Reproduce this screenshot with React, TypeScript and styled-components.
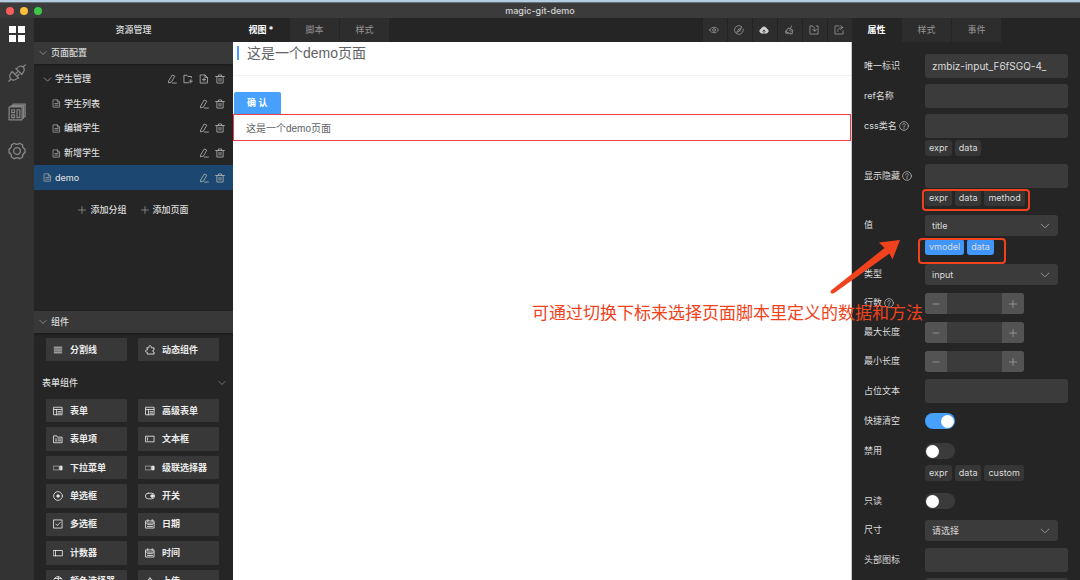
import React from 'react';
import styled, { createGlobalStyle, css } from 'styled-components';

const GlobalStyle = createGlobalStyle`
  *, *::before, *::after { box-sizing: border-box; }
  html, body { margin: 0; background: #252525; }
  body {
    font-family: Inter, "Noto Sans CJK SC", sans-serif;
    font-size: 9px;
    line-height: 12px;
    color: #dcdcdc;
  }
  button, input, select { font: inherit; color: inherit; margin: 0; border: 0; padding: 0; }
  button { background: none; cursor: pointer; }
  h1, h2, h3, p, ul { margin: 0; padding: 0; font-size: inherit; font-weight: inherit; list-style: none; }
  svg { display: block; flex: none; }
`;

/* ---------- icons ---------- */

const icons = {
  chevron: <path d="M2 5l6 6 6-6" />,
  edit: <path d="M3 10.500L8.500 1.500l4 2-5.500 9.500-4 1zM8.500 14.500H15" />,
  folderAdd: <path d="M13.500 6V4H8L6.500 2H1.500v12h8M12.500 9v5M10 11.500h5" />,
  fileAdd: <path d="M2.500 1.500h7l4 4v9h-11zM9.500 1.500v4h4M8 6.500v5M5.500 9h5" />,
  file: <path d="M2.500 1.500h7l4 4v9h-11zM9.500 1.500v4h4M5 8h6M5 11h6" />,
  trash: <path d="M1 4h14M5.500 4V1.500h5V4M3 4v10.500h10V4M6.500 7v4.500M9.500 7v4.500" />,
  plus: <path d="M8 1v14M1 8h14" />,
  minus: <path d="M2 8h12" />,
  lines: <path d="M2 3.500h12M2 6.500h12M2 9.500h12M2 12.500h12" />,
  puzzle: <path d="M3.500 4.500H6c-1-4.500 5-4.500 4 0h4.500v3.200c-3 0-3 3.600 0 3.600v3.200h-11v-3.200c-4 .2-4-3.800 0-3.600z" />,
  form: <path d="M1.500 2h13v12h-13zM1.500 5.500h13M5.500 5.500V14M8 9h4.500M8 11.500h4.500" />,
  formItem: <path d="M1.500 3H6l1 2h7.500v9h-13zM4 8h2M8 8h4.500M4 11h2M8 11h4.500" />,
  textbox: <path d="M1.500 3.500h13v9h-13zM4 6v4" />,
  dropdown: (
    <>
      <path d="M1 5h9v6H1z" opacity=".6" />
      <path d="M11.500 5h3v6h-3z" fill="currentColor" />
    </>
  ),
  radio: (
    <>
      <circle cx="8" cy="8" r="7" />
      <circle cx="8" cy="8" r="2" fill="currentColor" />
    </>
  ),
  toggle: (
    <>
      <rect x="0.700" y="3.500" width="14.600" height="9" rx="4.500" />
      <circle cx="11.500" cy="8" r="2.200" fill="currentColor" />
    </>
  ),
  check: <path d="M1.500 1.500h13v13h-13zM4.500 8l2.500 2.500 4.500-5" />,
  calendar: <path d="M1.500 3h13v11.500h-13zM1.500 6.500h13M4.500 1v3M11.500 1v3M4 9h2M7 9h2M10 9h2M4 12h2M7 12h2M10 12h2" />,
  counter: <path d="M1 4h14v8.500H1zM4 4v8.500" />,
  palette: <path d="M8 1a7 7 0 1 0 0 14zM8 1a7 7 0 0 1 0 14M1 8h14M3 4h10" />,
  upload: <path d="M8 14V3M3.500 7.500L8 3l4.500 4.500M2 14.500h12" />,
  help: (
    <>
      <circle cx="8" cy="8" r="7" />
      <path d="M5.800 6.300c0-3 4.400-2.800 4.400-.2C10.200 7.600 8 7.600 8 9.500M8 11v1.300" />
    </>
  ),
  eye: (
    <>
      <path d="M1 8c3-6 11-6 14 0-3 6-11 6-14 0z" />
      <circle cx="8" cy="8" r="2.300" />
    </>
  ),
  compass: (
    <>
      <path d="M12.500 2.700A7 7 0 1 0 14.700 6.500" />
      <path d="M4.500 11.500L7 7l5-3-2.500 5z" />
      <path d="M7 7l2.500 2" />
    </>
  ),
  cloud: (
    <>
      <path d="M4.500 13a3.300 3.300 0 0 1-.8-6.500 4.400 4.400 0 0 1 8.600 0 3.300 3.300 0 0 1-.8 6.500z" fill="currentColor" />
      <path d="M8 13V8.500M6 10l2-2 2 2" stroke="#2d2d2d" />
    </>
  ),
  broom: <path d="M12 1.500L10.500 6M7 5l7 3-1 6.500-3-2M7 5L2 10.500l9 4M5 8l-2.500 4.500 3 1.500 1.500-2.500M9 8.500l3 1.500" />,
  importBox: <path d="M4.500 1.500h-3v13h13v-13h-3M5 1.500c3.500 1 4 3.500 4 8M6 7l3 3 3-3" />,
  exportBox: <path d="M8 1.500H1.500v13h13V9M6 10c0-4 2-6 8-6M10.500 1L14 4l-3.500 3" />,
  link: (
    <>
      <path d="M7 4l5.500 5.500M7.500 4.500c1.300-2.500 4.300-3.500 6-1.800s.9 4.900-1.500 6.300M13.600 2.500L15.300.8" />
      <path d="M3.500 6.500l6 6M4 7c-2.500 1.300-3.300 4.500-1.500 6.300s4.900.9 6.500-1.300M2.500 13.500L.7 15.300" />
      <path d="M8.500 7L7 8.500M10 9L8.500 10.500" />
    </>
  ),
  template: (
    <path d="M1 3.500h11.500V15H1zM3 3.500V2.300h10.800V13.500h-1.300M4.500 2.300V1H15.200v11.200h-1.400M3.300 6h2.500v2.500H3.300zM3.300 10.500h2.500V13H3.300zM8 6h2.500v7H8z" />
  ),
  gear: (
    <>
      <path d="M15.100 6.500V9.500Q12.600 10.600 12.900 13.400L10.300 14.900Q8 13 5.700 14.900L3.100 13.400Q3.400 10.600 .9 9.500V6.500Q3.400 5.400 3.100 2.600L5.700 1.100Q8 3 10.300 1.100L12.900 2.600Q12.600 5.400 15.100 6.500Z" />
      <circle cx="8" cy="8" r="3" />
    </>
  ),
};

type IconName = keyof typeof icons;

const Icon = ({ name, size = 10, weight = 1.3 }: { name: IconName; size?: number; weight?: number }) => (
  <svg
    width={size}
    height={size}
    viewBox="0 0 16 16"
    fill="none"
    stroke="currentColor"
    strokeWidth={weight}
    strokeLinecap="round"
    strokeLinejoin="round"
    aria-hidden="true"
  >
    {icons[name]}
  </svg>
);

/* ---------- window frame ---------- */

const Window = styled.div`
  position: relative;
  display: flex;
  flex-direction: column;
  height: 100vh;
  overflow: hidden;
  border-top: 2px solid #b4cbe0;
`;

const TitleBar = styled.header`
  flex: none;
  display: grid;
  grid-template-columns: 1fr auto 1fr;
  align-items: center;
  height: 16px;
  padding: 0 6px;
  border-top: 1px solid #65707a;
  background: #3b3b3b;
  color: #d4d4d4;
  font-weight: 500;
`;

const Lights = styled.div`
  display: flex;
  gap: 6px;
`;

const Light = styled.span<{ $color: string }>`
  width: 8px;
  height: 8px;
  border-radius: 50%;
  background: ${(p) => p.$color};
`;

const Workspace = styled.div`
  flex: 1;
  display: grid;
  grid-template-columns: 34px 199px minmax(0, 1fr) 228px;
  min-height: 0;
`;

const Rail = styled.nav`
  display: flex;
  flex-direction: column;
  align-items: center;
  gap: 21px;
  padding-top: 7px;
  background: #333;
`;

const RailButton = styled.button`
  display: grid;
  place-items: center;
  width: 18px;
  height: 18px;
  color: #858585;
`;

const Squares = styled.span`
  display: grid;
  grid-template-columns: 7px 7px;
  grid-auto-rows: 7px;
  gap: 2px;

  i { background: #fff; }
`;

/* ---------- resource sidebar ---------- */

const Sidebar = styled.aside`
  display: flex;
  flex-direction: column;
  min-height: 0;
  overflow: hidden;
  background: #252525;
`;

const SidebarTitle = styled.h2`
  flex: none;
  height: 24px;
  line-height: 24px;
  text-align: center;
  font-weight: 500;
`;

const SectionHeader = styled.button`
  flex: none;
  display: flex;
  align-items: center;
  gap: 4px;
  width: 100%;
  height: 22px;
  padding: 0 5px;
  background: #383838;
  box-shadow: 0 1px 2px #1a1a1a;
  font-weight: 500;

  svg { color: #a0a0a0; }
`;

const PageSection = styled.section`
  flex: none;
  min-height: 247px;
  padding-top: 3px;
`;

const Tree = styled.ul`
  display: grid;
  grid-auto-rows: 1fr;
  min-height: 123px;
`;

const TreeRow = styled.li<{ $indent: number; $active?: boolean }>`
  display: flex;
  align-items: center;
  gap: 3px;
  padding: 0 8px 0 ${(p) => p.$indent}px;
  background: ${(p) => (p.$active ? '#1b4770' : 'transparent')};
  font-weight: 500;

  > svg { color: #a8a8a8; }
`;

const RowActions = styled.span`
  display: flex;
  gap: 6px;
  margin-left: auto;
  color: #b4b4b4;
`;

const AddBar = styled.div`
  display: flex;
  justify-content: center;
  gap: 14px;
  padding-top: 14px;
`;

const AddButton = styled.button`
  display: flex;
  align-items: center;
  gap: 4px;
  font-weight: 500;

  svg { color: #a8a8a8; }
`;

const Palette = styled.section`
  flex: 1;
  min-height: 0;
  overflow: hidden;
  padding: 5px 7px 0 8px;
`;

const WidgetGrid = styled.div<{ $height: number }>`
  display: grid;
  grid-template-columns: 1fr 1fr;
  grid-auto-rows: 1fr;
  gap: 5px 11px;
  min-height: ${(p) => p.$height}px;
  padding: 0 7px 0 4px;
`;

const Widget = styled.button`
  display: flex;
  align-items: center;
  gap: 7px;
  padding: 0 7px;
  border-radius: 1px;
  background: #383838;
  color: #ececec;
  font-weight: 700;
  white-space: nowrap;
`;

const GroupHeader = styled.button`
  display: flex;
  align-items: center;
  justify-content: space-between;
  width: 100%;
  height: 38px;
  padding-top: 6px;
  font-weight: 500;

  svg { color: #8c8c8c; }
`;

/* ---------- tabs and toolbar ---------- */

const TabBar = styled.div`
  flex: none;
  display: flex;
  height: 24px;
  background: #252525;
`;

const Tab = styled.button<{ $active?: boolean; $first?: boolean }>`
  min-width: ${(p) => (p.$first ? 57 : 50)}px;
  border-right: 1px solid #252525;
  background: #2d2d2d;
  color: #969696;
  ${(p) =>
    p.$active &&
    css`
      background: #252525;
      color: #fff;
      font-weight: 700;
    `}
`;

const Tools = styled.div`
  display: flex;
  margin-left: auto;
`;

const Tool = styled.button<{ $bright?: boolean }>`
  display: grid;
  place-items: center;
  width: 25px;
  border-left: 1px solid #232323;
  padding-right: 2px;
  background: #2d2d2d;
  color: ${(p) => (p.$bright ? '#d0d0d0' : '#969696')};
`;

/* ---------- page canvas ---------- */

const Editor = styled.main`
  display: flex;
  flex-direction: column;
  min-width: 0;
`;

const Canvas = styled.div`
  flex: 1;
  background: #fff;
  border-right: 1px solid #c8c8c8;
  font-family: "Liberation Sans", "Noto Sans CJK SC", sans-serif;
  color: #606266;
`;

const CanvasHeader = styled.div`
  display: flex;
  align-items: center;
  height: 34px;
  padding: 0 4px 12px;
  border-bottom: 1px solid #f1f2f4;
`;

const CanvasTitle = styled.h1`
  padding-left: 8px;
  border-left: 2px solid #46a0fc;
  font-size: 14px;
  line-height: 14px;
`;

const ConfirmButton = styled.button`
  display: block;
  height: 22px;
  margin: 16px 0 0 1px;
  padding: 0 13px;
  border-radius: 2px 2px 0 0;
  background: #46a0fc;
  color: #fff;
  font-weight: 700;
`;

const CanvasInput = styled.input`
  display: block;
  width: 100%;
  height: 27px;
  padding: 0 12px;
  border: 1px solid #ee3c48;
  background: #fff;
  font-size: 10px;
  outline: none;
`;

/* ---------- property inspector ---------- */

const Inspector = styled.aside`
  display: flex;
  flex-direction: column;
  min-height: 0;
  overflow: hidden;
  background: #252525;
`;

const Form = styled.form`
  display: flex;
  flex-direction: column;
  gap: 6px;
  padding: 12px 12px 0;
`;

const Field = styled.div`
  display: grid;
  grid-template-columns: 61px 1fr;
`;

const FieldLabel = styled.label`
  display: flex;
  align-items: center;
  gap: 2px;
  padding-bottom: 1px;
  white-space: nowrap;

  svg { color: #b4b4b4; }
`;

const ControlLine = styled.div<{ $tall?: boolean }>`
  display: flex;
  align-items: center;
  height: ${(p) => (p.$tall ? 24 : 23)}px;
`;

const TextInput = styled.input`
  width: 100%;
  height: 24px;
  padding: 0 7px;
  border-radius: 3px;
  background: #3b3b3b;
  font-size: 10px;
`;

const SelectBox = styled.span`
  display: grid;
  align-items: center;
  width: 133px;
  height: 21px;
  border-radius: 3px;
  background: #3b3b3b;

  > * { grid-area: 1 / 1; }
  svg { justify-self: end; margin-right: 8px; color: #a8a8a8; pointer-events: none; }
`;

const SelectInput = styled.select`
  appearance: none;
  width: 100%;
  height: 21px;
  padding: 0 7px;
  background: transparent;
`;

const Stepper = styled.span`
  display: grid;
  grid-template-columns: 22px 55px 22px;
  height: 21px;
  overflow: hidden;
  border-radius: 3px;
  background: #3b3b3b;

  input { min-width: 0; background: transparent; text-align: center; }
  button { display: grid; place-items: center; background: #535353; color: #a0a0a0; }
`;

const Switch = styled.input`
  appearance: none;
  display: flex;
  align-items: center;
  width: 30px;
  height: 16px;
  padding: 0 1px;
  border-radius: 8px;
  background: #3b3b3b;

  &::before {
    content: '';
    width: 13px;
    height: 13px;
    border-radius: 50%;
    background: #fff;
  }
  &:checked { justify-content: flex-end; background: #46a0fc; }
`;

const Tags = styled.div`
  grid-column: 2;
  display: flex;
  gap: 3px;
  margin: 2px 0;
`;

const Tag = styled.button<{ $on?: boolean }>`
  height: 16px;
  padding: 0 4px;
  border-radius: 3px;
  background: ${(p) => (p.$on ? '#4096fb' : '#363636')};
`;

/* ---------- annotations drawn over the window ---------- */

const Frame = styled.span<{ $top: number; $right: number; $width: number; $height: number }>`
  position: absolute;
  top: ${(p) => p.$top}px;
  right: ${(p) => p.$right}px;
  width: ${(p) => p.$width}px;
  height: ${(p) => p.$height}px;
  border: 2px solid #f0421c;
  border-radius: 4px;
  pointer-events: none;
`;

const Arrow = styled.svg`
  position: absolute;
  top: 236px;
  right: 176px;
  pointer-events: none;
`;

const Note = styled.p`
  position: absolute;
  top: 299px;
  right: 157px;
  color: #f0421c;
  font-size: 17px;
  line-height: 24px;
  white-space: nowrap;
  pointer-events: none;
`;

/* ---------- data ---------- */

type Page = { name: string; kind: 'group' | 'child' | 'page'; active?: boolean };

const pages: Page[] = [
  { name: '学生管理', kind: 'group' },
  { name: '学生列表', kind: 'child' },
  { name: '编辑学生', kind: 'child' },
  { name: '新增学生', kind: 'child' },
  { name: 'demo', kind: 'page', active: true },
];

const basicWidgets: [IconName, string][] = [
  ['lines', '分割线'],
  ['puzzle', '动态组件'],
];

const formWidgets: [IconName, string][] = [
  ['form', '表单'],
  ['form', '高级表单'],
  ['formItem', '表单项'],
  ['textbox', '文本框'],
  ['dropdown', '下拉菜单'],
  ['dropdown', '级联选择器'],
  ['radio', '单选框'],
  ['toggle', '开关'],
  ['check', '多选框'],
  ['calendar', '日期'],
  ['counter', '计数器'],
  ['calendar', '时间'],
  ['palette', '颜色选择器'],
  ['upload', '上传'],
];

const tools: [IconName, string][] = [
  ['eye', '预览'],
  ['compass', '浏览'],
  ['cloud', '发布'],
  ['broom', '清空'],
  ['importBox', '导入'],
  ['exportBox', '导出'],
];

type FieldSpec = {
  label: string;
  type: 'text' | 'select' | 'number' | 'switch';
  value?: string;
  help?: boolean;
  on?: boolean;
  tags?: string[];
  tagsOn?: boolean;
};

const fields: FieldSpec[] = [
  { label: '唯一标识', type: 'text', value: 'zmbiz-input_F6fSGQ-4_' },
  { label: 'ref名称', type: 'text' },
  { label: 'css类名', type: 'text', help: true, tags: ['expr', 'data'] },
  { label: '显示隐藏', type: 'text', help: true, tags: ['expr', 'data', 'method'] },
  { label: '值', type: 'select', value: 'title', tags: ['vmodel', 'data'], tagsOn: true },
  { label: '类型', type: 'select', value: 'input' },
  { label: '行数', type: 'number', help: true },
  { label: '最大长度', type: 'number' },
  { label: '最小长度', type: 'number' },
  { label: '占位文本', type: 'text' },
  { label: '快捷清空', type: 'switch', on: true },
  { label: '禁用', type: 'switch', tags: ['expr', 'data', 'custom'] },
  { label: '只读', type: 'switch' },
  { label: '尺寸', type: 'select', value: '请选择' },
  { label: '头部图标', type: 'text' },
  { label: '', type: 'text' },
];

const Control = ({ id, spec }: { id: string; spec: FieldSpec }) => {
  switch (spec.type) {
    case 'select':
      return (
        <SelectBox>
          <SelectInput id={id} defaultValue={spec.value}>
            <option>{spec.value}</option>
          </SelectInput>
          <Icon name="chevron" size={10} />
        </SelectBox>
      );
    case 'number':
      return (
        <Stepper>
          <button type="button" aria-label="减少"><Icon name="minus" size={8} weight={1.6} /></button>
          <input id={id} inputMode="numeric" />
          <button type="button" aria-label="增加"><Icon name="plus" size={8} weight={1.6} /></button>
        </Stepper>
      );
    case 'switch':
      return <Switch id={id} type="checkbox" role="switch" defaultChecked={spec.on} />;
    default:
      return <TextInput id={id} defaultValue={spec.value} />;
  }
};

const indents = { group: 9, child: 18, page: 9 };

export default function App() {
  return (
    <Window>
      <GlobalStyle />
      <TitleBar>
        <Lights>
          <Light $color="#f55f58" />
          <Light $color="#f8bd3c" />
          <Light $color="#3ec648" />
        </Lights>
        <span>magic-git-demo</span>
      </TitleBar>

      <Workspace>
        <Rail>
          <RailButton aria-label="资源管理">
            <Squares><i /><i /><i /><i /></Squares>
          </RailButton>
          <RailButton aria-label="连接"><Icon name="link" size={18} weight={1.1} /></RailButton>
          <RailButton aria-label="模板"><Icon name="template" size={18} weight={1.1} /></RailButton>
          <RailButton aria-label="设置"><Icon name="gear" size={18} weight={1.2} /></RailButton>
        </Rail>

        <Sidebar>
          <SidebarTitle>资源管理</SidebarTitle>
          <SectionHeader><Icon name="chevron" size={8} weight={1.6} />页面配置</SectionHeader>
          <PageSection>
            <Tree>
              {pages.map((page) => (
                <TreeRow key={page.name} $indent={indents[page.kind]} $active={page.active}>
                  <Icon name={page.kind === 'group' ? 'chevron' : 'file'} size={9} />
                  {page.name}
                  <RowActions>
                    <button aria-label="编辑"><Icon name="edit" /></button>
                    {page.kind === 'group' && (
                      <>
                        <button aria-label="添加分组"><Icon name="folderAdd" /></button>
                        <button aria-label="添加页面"><Icon name="fileAdd" /></button>
                      </>
                    )}
                    <button aria-label="删除"><Icon name="trash" /></button>
                  </RowActions>
                </TreeRow>
              ))}
            </Tree>
            <AddBar>
              <AddButton><Icon name="plus" size={8} />添加分组</AddButton>
              <AddButton><Icon name="plus" size={8} />添加页面</AddButton>
            </AddBar>
          </PageSection>

          <SectionHeader><Icon name="chevron" size={8} weight={1.6} />组件</SectionHeader>
          <Palette>
            <WidgetGrid $height={23}>
              {basicWidgets.map(([icon, name]) => (
                <Widget key={name}><Icon name={icon} />{name}</Widget>
              ))}
            </WidgetGrid>
            <GroupHeader>表单组件<Icon name="chevron" size={8} weight={1.6} /></GroupHeader>
            <WidgetGrid $height={194}>
              {formWidgets.map(([icon, name]) => (
                <Widget key={name}><Icon name={icon} />{name}</Widget>
              ))}
            </WidgetGrid>
          </Palette>
        </Sidebar>

        <Editor>
          <TabBar>
            <Tab $active $first>视图 *</Tab>
            <Tab>脚本</Tab>
            <Tab>样式</Tab>
            <Tools>
              {tools.map(([icon, name]) => (
                <Tool key={icon} aria-label={name} $bright={icon === 'cloud'}>
                  <Icon name={icon} />
                </Tool>
              ))}
            </Tools>
          </TabBar>
          <Canvas>
            <CanvasHeader>
              <CanvasTitle>这是一个demo页面</CanvasTitle>
            </CanvasHeader>
            <ConfirmButton>确 认</ConfirmButton>
            <CanvasInput aria-label="标题" defaultValue="这是一个demo页面" />
          </Canvas>
        </Editor>

        <Inspector>
          <TabBar>
            <Tab $active>属性</Tab>
            <Tab>样式</Tab>
            <Tab>事件</Tab>
          </TabBar>
          <Form>
            {fields.map((spec, index) => {
              const id = `field-${index}`;
              return (
                <Field key={id}>
                  <FieldLabel htmlFor={id}>
                    {spec.label}
                    {spec.help && <Icon name="help" />}
                  </FieldLabel>
                  <ControlLine $tall={spec.type === 'text' || spec.type === 'switch'}>
                    <Control id={id} spec={spec} />
                  </ControlLine>
                  {spec.tags && (
                    <Tags>
                      {spec.tags.map((tag) => (
                        <Tag key={tag} type="button" $on={spec.tagsOn}>{tag}</Tag>
                      ))}
                    </Tags>
                  )}
                </Field>
              );
            })}
          </Form>
        </Inspector>
      </Workspace>

      <Frame $top={187} $right={50} $width={108} $height={22} />
      <Frame $top={236} $right={74} $width={88} $height={26} />
      <Arrow width="74" height="58" viewBox="830 238 74 58" aria-hidden="true">
        <path d="M900 240L879 242.500L884.500 248L831 290.500Q830 292.500 831.500 293.500Q833 294 835 292.500L889.500 253.500L892.500 259.500Z" fill="#f0421c" />
      </Arrow>
      <Note>可通过切换下标来选择页面脚本里定义的数据和方法</Note>
    </Window>
  );
}
